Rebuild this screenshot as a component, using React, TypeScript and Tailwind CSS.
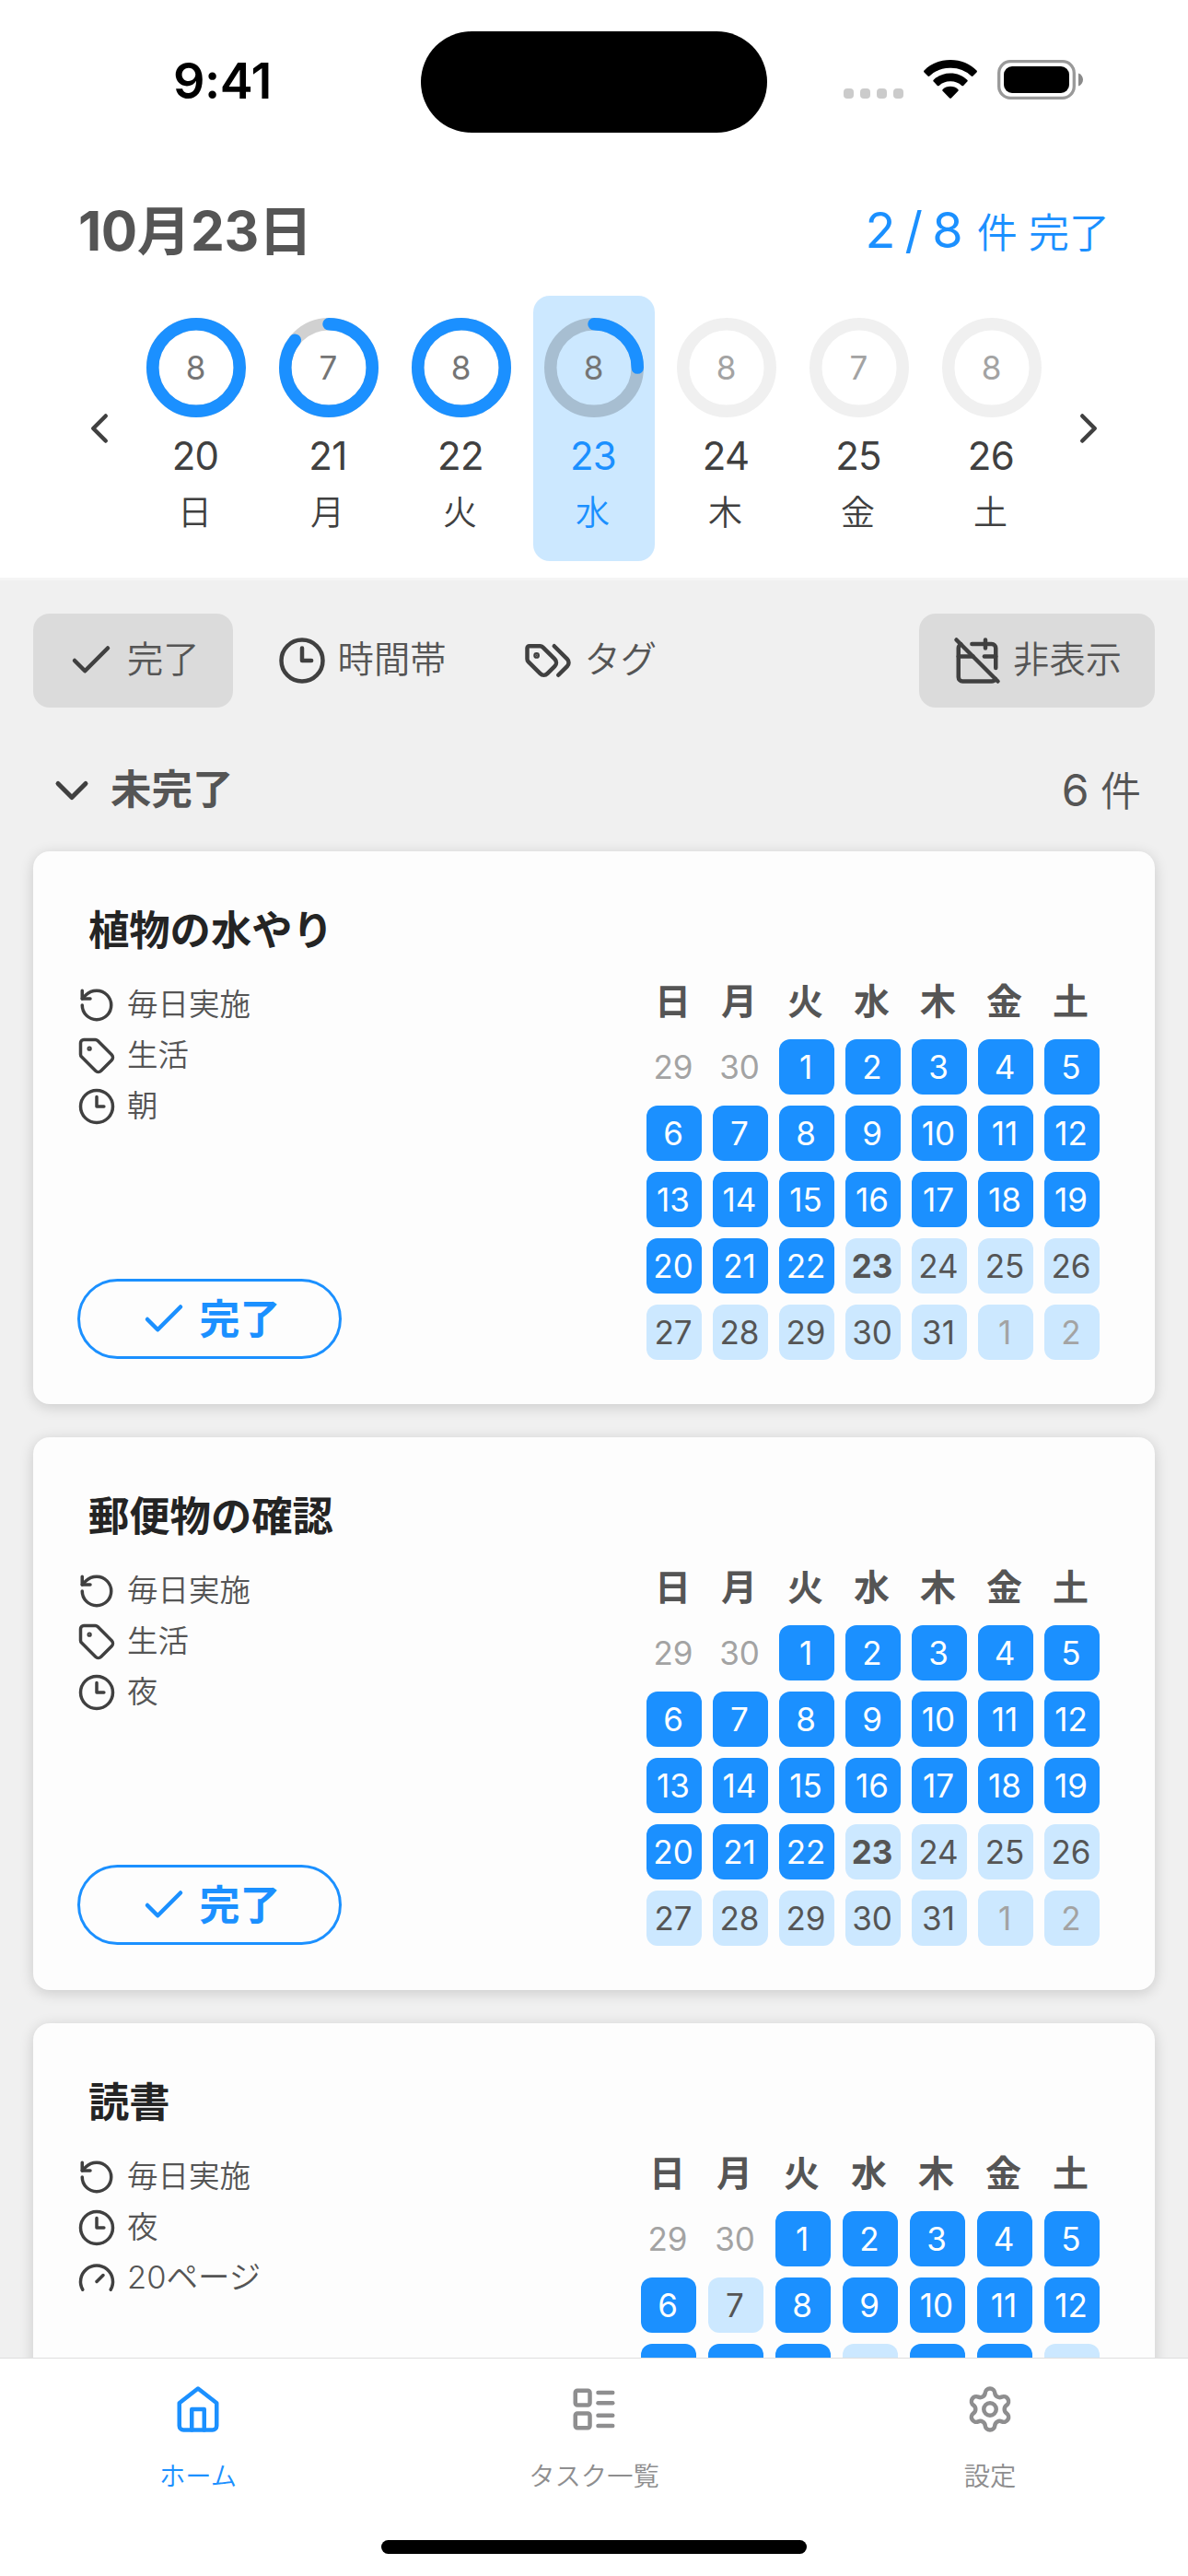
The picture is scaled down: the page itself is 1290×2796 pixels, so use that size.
import clsx from "clsx";
import type { ReactNode } from "react";
import {
    CalendarOff,
    Check,
    ChevronDown,
    ChevronLeft,
    ChevronRight,
    LayoutList,
    Settings,
} from "lucide-react";

const weekdays = ["日", "月", "火", "水", "木", "金", "土"];

const week = [
    { date: 20, total: 8, done: 8 },
    { date: 21, total: 7, done: 6 },
    { date: 22, total: 8, done: 8 },
    { date: 23, total: 8, done: 2 },
    { date: 24, total: 8, done: 0 },
    { date: 25, total: 7, done: 0 },
    { date: 26, total: 8, done: 0 },
];

const today = 23;

// 29, 30, 1 ... 31, 1, 2
const monthCells = Array.from({ length: 35 }, (_, i) => {
    if (i < 2) return { day: 29 + i, index: i - 1, outside: true };
    if (i > 32) return { day: i - 32, index: i - 1, outside: true };
    return { day: i - 1, index: i - 1, outside: false };
});

type IconName = "repeat" | "tag" | "clock" | "gauge";

type Task = {
    title: string;
    info: { icon: IconName; text: string }[];
    skipped: number[];
    wide?: boolean;
};

const tasks: Task[] = [
    {
        title: "植物の水やり",
        info: [
            { icon: "repeat", text: "毎日実施" },
            { icon: "tag", text: "生活" },
            { icon: "clock", text: "朝" },
        ],
        skipped: [],
    },
    {
        title: "郵便物の確認",
        info: [
            { icon: "repeat", text: "毎日実施" },
            { icon: "tag", text: "生活" },
            { icon: "clock", text: "夜" },
        ],
        skipped: [],
    },
    {
        title: "読書",
        info: [
            { icon: "repeat", text: "毎日実施" },
            { icon: "clock", text: "夜" },
            { icon: "gauge", text: "20ページ" },
        ],
        skipped: [7, 16, 19],
        wide: true,
    },
];

function Icon({ className, children }: { className: string; children: ReactNode }) {
    return (
        <svg
            viewBox="0 0 24 24"
            fill="none"
            stroke="currentColor"
            strokeWidth="2"
            strokeLinecap="round"
            strokeLinejoin="round"
            className={clsx("shrink-0", className)}>
            {children}
        </svg>
    );
}

function ClockIcon({ className }: { className: string }) {
    return (
        <Icon className={className}>
            <circle cx="12" cy="12" r="10" />
            <path d="M12 6v6h4.5" />
        </Icon>
    );
}

function TagsIcon({ className }: { className: string }) {
    return (
        <Icon className={className}>
            <path d="m15 5 6.3 6.3a2.4 2.4 0 0 1 0 3.4L17 19" />
            <path d="M9.586 5.586A2 2 0 0 0 8.172 5H3a1 1 0 0 0-1 1v5.172a2 2 0 0 0 .586 1.414L8.29 18.29a2.426 2.426 0 0 0 3.42 0l3.58-3.58a2.426 2.426 0 0 0 0-3.42z" />
            <circle cx="6.5" cy="9.5" r="0.5" fill="currentColor" />
        </Icon>
    );
}

function HomeIcon({ className }: { className: string }) {
    return (
        <Icon className={className}>
            <path d="m3 9 9-7 9 7v11a2 2 0 0 1-2 2H5a2 2 0 0 1-2-2z" />
            <path d="M9 22V12h6v10" />
        </Icon>
    );
}

function InfoIcon({ name }: { name: IconName }) {
    const size = "size-[42px] text-[#404040]";
    if (name === "clock") return <ClockIcon className={size} />;
    if (name === "repeat")
        return (
            <Icon className={size}>
                <path d="M3 12a9 9 0 1 0 9-9 9.75 9.75 0 0 0-6.74 2.74L3 8" />
                <path d="M3 3v5h5" />
            </Icon>
        );
    if (name === "tag")
        return (
            <Icon className={size}>
                <path d="M12.586 2.586A2 2 0 0 0 11.172 2H4a2 2 0 0 0-2 2v7.172a2 2 0 0 0 .586 1.414l8.704 8.704a2.426 2.426 0 0 0 3.42 0l6.58-6.58a2.426 2.426 0 0 0 0-3.42z" />
                <circle cx="7.5" cy="7.5" r="0.5" fill="currentColor" />
            </Icon>
        );
    return (
        <Icon className={size}>
            <path d="m12 14 4-4" />
            <path d="M3.34 19a10 10 0 1 1 17.32 0" />
        </Icon>
    );
}

function StatusBar() {
    return (
        <div className="flex h-[186px] items-start pt-[33px]">
            <div className="flex h-[110px] w-[457px] items-center pl-[188px] text-[54px] font-semibold leading-none tracking-[-0.5px] text-black">
                9:41
            </div>
            <div className="mt-px h-[110px] w-[376px] rounded-full bg-black" />
            <div className="flex h-[110px] items-start pl-[83px] pt-[32px]">
                <div className="flex gap-[7px] pt-[31px]">
                    {[0, 1, 2, 3].map((i) => (
                        <span key={i} className="size-[11px] rounded-[4px] bg-[#cbcbcb]" />
                    ))}
                </div>
                <svg viewBox="0 0 58 42" className="ml-[22px] h-[42px] w-[58px]" fill="black">
                    <path d="M29 0c11.500 0 21.500 4.300 28.500 11.500.6.600.6 1.400 0 2L53.500 17.500c-.5.600-1.300.6-1.900 0A32 32 0 0 0 29 8.800 32 32 0 0 0 6.400 17.500c-.6.600-1.400.6-1.900 0L.5 13.500c-.6-.6-.6-1.400 0-2C7.500 4.300 17.500 0 29 0z" />
                    <path d="M29 14.400c7.300 0 13.700 2.700 18.300 7.300.6.600.6 1.300 0 1.900l-4.200 4.300c-.5.500-1.200.5-1.800 0A18 18 0 0 0 29 23.300a18 18 0 0 0-12.300 4.600c-.6.500-1.300.5-1.800 0l-4.200-4.300c-.6-.6-.6-1.300 0-1.900C15.300 17.100 21.700 14.400 29 14.400z" />
                    <path d="M29 28.800c3.300 0 6.200 1.200 8.300 3.100.6.600.6 1.300.1 1.900L29.900 41.400c-.5.600-1.300.6-1.800 0L20.600 33.800c-.5-.6-.5-1.300.1-1.900 2.100-1.900 5-3.100 8.300-3.100z" />
                </svg>
                <svg viewBox="0 0 94 43" className="ml-[22px] h-[43px] w-[94px]">
                    <rect x="1.700" y="1.700" width="81.600" height="39.600" rx="12.500" fill="none" stroke="#999" strokeWidth="3.300" />
                    <rect x="7" y="7" width="71" height="29" rx="9" fill="black" />
                    <path d="M88 14.500c3 1 5 3.700 5 7s-2 6-5 7z" fill="#8a8a8a" />
                </svg>
            </div>
        </div>
    );
}

function Ring({ total, done, future }: { total: number; done: number; future: boolean }) {
    const r = 47.25;
    const length = 2 * Math.PI * r;
    return (
        <div className="relative flex size-[108px] items-center justify-center">
            <svg viewBox="0 0 108 108" fill="none" className="absolute inset-0 -rotate-90">
                <circle cx="54" cy="54" r={r} strokeWidth="13.500" stroke="black" strokeOpacity={future ? 0.06 : 0.18} />
                {done > 0 && (
                    <circle
                        cx="54"
                        cy="54"
                        r={r}
                        strokeWidth="13.500"
                        stroke="#1b90ff"
                        strokeLinecap="round"
                        strokeDasharray={`${(length * done) / total} ${length}`}
                    />
                )}
            </svg>
            <span className={clsx("relative pr-px text-[35px] leading-none", future ? "text-[#a3a3a3]" : "text-[#757575]")}>
                {total}
            </span>
        </div>
    );
}

function WeekStrip() {
    return (
        <div className="flex items-center gap-3 px-[81px] text-[#404040]">
            <ChevronLeft size={54} />
            <div className="flex gap-3">
                {week.map((day, i) => (
                    <div
                        key={day.date}
                        className={clsx(
                            "flex h-[288px] w-[132px] flex-col items-center rounded-[18px] pt-6",
                            day.date === today && "bg-[#cce8ff] text-[#1b90ff]",
                        )}>
                        <Ring total={day.total} done={day.done} future={day.date > today} />
                        <span className="mt-[12px] pr-[2px] text-[42px] leading-[60px] tracking-[-0.7px]">{day.date}</span>
                        <span className="pr-[3px] pt-[2px] text-[37px] font-[350] leading-[60px]">{weekdays[i]}</span>
                    </div>
                ))}
            </div>
            <ChevronRight size={54} />
        </div>
    );
}

function Chip({ icon, label, active }: { icon: ReactNode; label: string; active?: boolean }) {
    return (
        <div
            className={clsx(
                "flex h-[102px] items-center gap-3 rounded-[18px] px-9 text-[#404040]",
                active && "bg-[#dbdbdb]",
            )}>
            {icon}
            <span className="pb-[3px] text-[39.300px] font-[350] leading-[54px] text-[#555]">{label}</span>
        </div>
    );
}

function MonthCalendar({ skipped, wide }: { skipped: number[]; wide?: boolean }) {
    return (
        <div className={clsx("grid grid-cols-[repeat(7,60px)] gap-y-3", wide ? "gap-x-[13px]" : "gap-x-3")}>
            {weekdays.map((name) => (
                <div key={name} className="flex h-[60px] items-center justify-center pr-[3px] text-[39px] font-semibold leading-none text-[#555]">
                    {name}
                </div>
            ))}
            {monthCells.map(({ day, index, outside }) => {
                const done = index > 0 && index < today && !skipped.includes(index);
                return (
                    <div
                        key={index}
                        className={clsx(
                            "flex h-[60px] items-center justify-center rounded-[12px] pr-[2px] text-[35px] leading-none",
                            done && "bg-[#1b90ff] text-white",
                            !done && index > 0 && "bg-[#cce8ff]",
                            !done && (outside ? "text-[#a3a3a3]" : "text-[#555]"),
                            index === today && "font-bold",
                        )}>
                        {day}
                    </div>
                );
            })}
        </div>
    );
}

function TaskCard({ task }: { task: Task }) {
    return (
        <div className="flex h-[600px] shrink-0 flex-col rounded-[18px] bg-[#fdfdfd] py-12 pl-12 pr-[60px] shadow-[0_3px_15px_rgba(0,0,0,0.16)]">
            <h2 className="h-[84px] pl-3 text-[44.300px] font-bold leading-[76px] text-[#242424]">{task.title}</h2>
            <div className="flex flex-1 justify-between">
                <div className="flex flex-col pt-[7px]">
                    {task.info.map((item) => (
                        <div key={item.icon} className="flex h-[55px] items-center gap-3">
                            <InfoIcon name={item.icon} />
                            <span
                                className={clsx(
                                    "font-[350] leading-none text-[#555]",
                                    item.icon === "gauge" ? "text-[34.500px]" : "text-[33.500px]",
                                )}>
                                {item.text}
                            </span>
                        </div>
                    ))}
                    <button className="mb-px mt-auto flex h-[87px] w-[287px] items-center justify-center gap-3 rounded-full border-[3px] border-[#1b90ff] text-[#1b90ff]">
                        <Check size={54} />
                        <span className="text-[44px] font-bold leading-none">完了</span>
                    </button>
                </div>
                <MonthCalendar skipped={task.skipped} wide={task.wide} />
            </div>
        </div>
    );
}

function TabBar() {
    const tabs = [
        { label: "ホーム", icon: <HomeIcon className="size-[54px]" />, active: true },
        { label: "タスク一覧", icon: <LayoutList size={54} /> },
        { label: "設定", icon: <Settings size={54} /> },
    ];
    return (
        <nav className="relative h-[237px] shrink-0 border-t border-[#dedede] bg-white">
            <div className="grid grid-cols-3">
                {tabs.map((tab) => (
                    <div
                        key={tab.label}
                        className={clsx(
                            "flex flex-col items-center pt-[28px]",
                            tab.active ? "text-[#1b90ff]" : "text-[#8e8e8f]",
                        )}>
                        {tab.icon}
                        <span className="mt-[25px] text-[28.300px] font-[350] leading-[42px]">{tab.label}</span>
                    </div>
                ))}
            </div>
            <div className="absolute bottom-6 left-[414px] h-[15px] w-[462px] rounded-full bg-black" />
        </nav>
    );
}

export default function App() {
    return (
        <div className="flex h-[2796px] w-[1290px] flex-col overflow-hidden bg-[#f0f0f0] font-['Inter','Noto_Sans_CJK_JP',sans-serif]">
            <header className="h-[630px] shrink-0 border-b-[3px] border-[#f5f5f5] bg-white">
                <StatusBar />
                <div className="flex h-[135px] items-start justify-between pl-[85px] pr-[85px]">
                    <h1 className="text-[58.500px] font-bold leading-[129px] tracking-[-0.4px] text-[#555]">10月23日</h1>
                    <p className="flex items-baseline text-[#1b90ff]">
                        <span className="text-[54px] leading-[128px] [word-spacing:-5px]">2 / 8</span>
                        <span className="ml-[15px] text-[44px] font-[350]">件 完了</span>
                    </p>
                </div>
                <WeekStrip />
            </header>

            <main className="flex flex-1 flex-col overflow-hidden px-9 pt-9">
                <div className="flex shrink-0 gap-3">
                    <Chip active label="完了" icon={<Check size={54} />} />
                    <Chip label="時間帯" icon={<ClockIcon className="size-[54px]" />} />
                    <Chip label="タグ" icon={<TagsIcon className="size-[54px]" />} />
                    <div className="ml-auto">
                        <Chip active label="非表示" icon={<CalendarOff size={54} />} />
                    </div>
                </div>

                <div className="flex h-[156px] shrink-0 items-center pl-3 pr-[15px] pt-6 text-[#555]">
                    <ChevronDown size={60} className="text-[#404040]" />
                    <span className="ml-3 pb-px text-[44.500px] font-bold leading-none">未完了</span>
                    <span className="ml-auto pb-px text-[48px] leading-none">
                        6 <span className="-ml-px text-[44px] font-[350]">件</span>
                    </span>
                </div>

                <div className="flex flex-col gap-9">
                    {tasks.map((task) => (
                        <TaskCard key={task.title} task={task} />
                    ))}
                </div>
            </main>

            <TabBar />
        </div>
    );
}
